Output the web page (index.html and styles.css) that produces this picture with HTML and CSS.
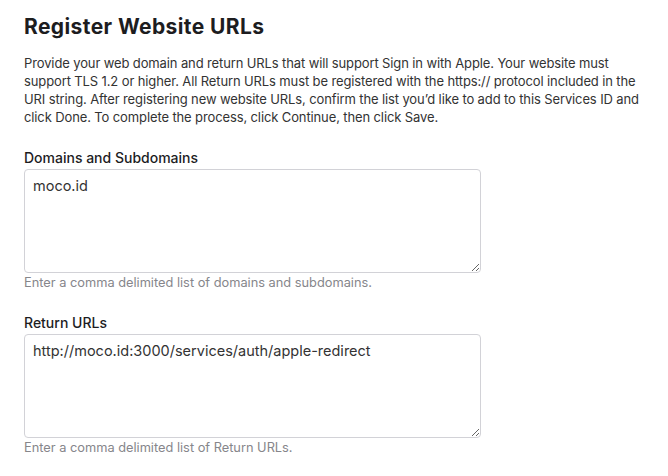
FILE: index.html
```html
<!DOCTYPE html>
<html>
<head>
<meta charset="utf-8">
<link rel="stylesheet" href="styles.css">
</head>
<body>
<main class="page">
  <h1 class="title">Register Website URLs</h1>
  <p class="intro">Provide your web domain and return URLs that will support Sign in with Apple. Your website must support TLS 1.2 or higher. All Return URLs must be registered with the https:// protocol included in the URI string. After registering new website URLs, confirm the list you’d like to add to this Services ID and click Done. To complete the process, click Continue, then click Save.</p>
  <div class="field">
    <label class="label">Domains and Subdomains</label>
    <textarea class="box">moco.id</textarea>
    <div class="hint">Enter a comma delimited list of domains and subdomains.</div>
  </div>
  <div class="field">
    <label class="label">Return URLs</label>
    <textarea class="box">http://moco.id:3000/services/auth/apple-redirect</textarea>
    <div class="hint">Enter a comma delimited list of Return URLs.</div>
  </div>
</main>
</body>
</html>
```
FILE: styles.css
```css
html, body { margin: 0; background: #fff; }
body { font-family: Inter, "Noto Sans", sans-serif; color: #1d1d1f; }
.page { padding: 14px 0 0 24px; width: 630px; }
.title { margin: 0; font-size: 21px; line-height: 26px; font-weight: 700; letter-spacing: 0.4px; color: #1d1d1f; }
.intro { margin: 14px 0 0; font-size: 13px; line-height: 18px; letter-spacing: -0.12px; color: #333; }
.field { display: flex; flex-direction: column; margin-top: 23px; }
.field + .field { margin-top: 22px; }
.label { font-size: 14px; line-height: 18px; font-weight: 500; color: #1d1d1f; margin-bottom: 2px; }
.box { width: 457px; height: 104px; box-sizing: border-box; border: 1px solid #d2d2d7; border-radius: 4px; padding: 6px 8px; font-family: Inter, "Noto Sans", sans-serif; font-size: 14.5px; line-height: 20px; color: #333; resize: vertical; outline: none; margin: 0; }
.hint { font-size: 12.8px; line-height: 18px; color: #86868b; margin-top: 1px; }
```
